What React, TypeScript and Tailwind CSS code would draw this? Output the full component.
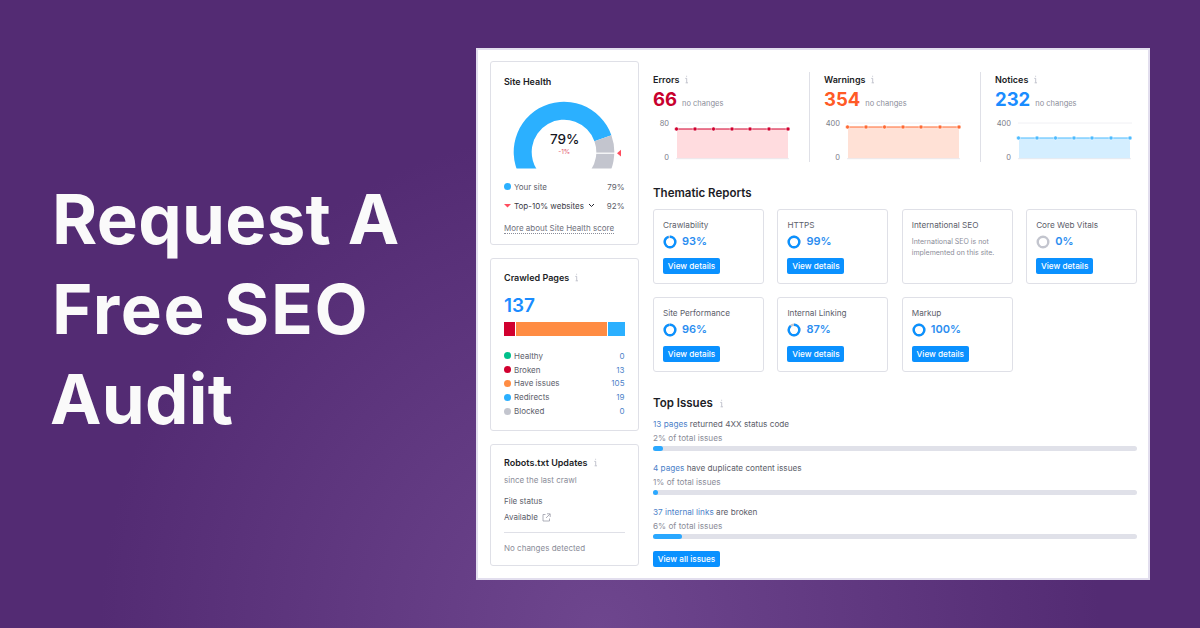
import React from "react";

const font = "font-['Inter','Noto_Sans',sans-serif]";

function Info({ className = "" }: { className?: string }) {
  return (
    <svg viewBox="0 0 5 9" className={`inline-block w-[5px] h-[9px] ${className}`}>
      <path d="M2.6 0.8v0.9M1.3 3.4h1.4v4.2M1.6 7.8h2.4" fill="none" stroke="#b4b6c2" strokeWidth="0.8" />
    </svg>
  );
}

function Dot({ color }: { color: string }) {
  return <span className="w-[7px] h-[7px] rounded-full shrink-0" style={{ background: color }} />;
}

function Gauge() {
  const cx = 60;
  const cy = 52;
  const arc = (r1: number, r2: number, a1: number, a2: number) => {
    const p = (r: number, a: number) => `${cx + r * Math.cos(a)} ${cy - r * Math.sin(a)}`;
    const large = a1 - a2 > Math.PI ? 1 : 0;
    return `M${p(r1, a1)} A${r1} ${r1} 0 ${large} 1 ${p(r1, a2)} L${p(r2, a2)} A${r2} ${r2} 0 ${large} 0 ${p(r2, a1)} Z`;
  };
  const split = (19.6 * Math.PI) / 180;
  const start = Math.PI + 0.7;
  const end = -0.7;
  return (
    <svg width="120" height="70" viewBox="0 0 120 70" className="block">
      <defs>
        <clipPath id="gauge-clip">
          <rect x="0" y="0" width="120" height="68.5" />
        </clipPath>
      </defs>
      <g clipPath="url(#gauge-clip)">
        <path d={arc(50.3, 32.3, start, split)} fill="#2bb0ff" />
        <path d={arc(50.3, 32.3, split, end)} fill="#c3c5ce" />
        <rect x="91" y="52.6" width="20" height="1.2" fill="#ffffff" />
      </g>
      <path d="M113 53.2l4-3.4v6.8z" fill="#ff4d5e" />
    </svg>
  );
}

function SiteHealth() {
  return (
    <section className="h-[184px] border border-[#dfe0e7] rounded-[3px] px-[13.5px] pt-[12.5px] mb-[13px]">
      <h3 className="text-[9px] leading-[13px] font-semibold text-[#1c1d26]">Site Health</h3>
      <div className="relative mt-[12px] mx-auto w-[120px] h-[70px]">
        <Gauge />
        <div className="absolute left-[1px] right-0 top-[31px] text-center text-[13.5px] leading-[16px] font-medium text-[#16171f]">79%</div>
        <div className="absolute left-0 right-0 top-[48px] text-center text-[6.5px] leading-[8px] text-[#e2566f]">-1%</div>
      </div>
      <div className="mt-[11px] flex items-center justify-between h-[12px] text-[8px] text-[#5c5e6a]">
        <span className="flex items-center gap-[3px]"><Dot color="#2bb0ff" />Your site</span>
        <span>79%</span>
      </div>
      <div className="mt-[7px] flex items-center justify-between h-[12px] text-[8px] text-[#3a3b46]">
        <span className="flex items-center gap-[3px]">
          <svg width="7" height="4" viewBox="0 0 7 4"><path d="M0 0h7L3.5 3.5z" fill="#ff4d5e" /></svg>
          Top-10% websites
          <svg width="7" height="5" viewBox="0 0 7 5" className="ml-[1px]"><path d="M1 1l2.5 2.5L6 1" fill="none" stroke="#26272f" strokeWidth="1" /></svg>
        </span>
        <span className="text-[#5c5e6a]">92%</span>
      </div>
      <div className="mt-[11px] text-[8px] leading-[11px] text-[#6f717d]">
        <span className="border-b border-dotted border-[#8b8d99]">More about Site Health score</span>
      </div>
    </section>
  );
}

const crawled = [
  { label: "Healthy", value: 0, color: "#00c08b" },
  { label: "Broken", value: 13, color: "#d1002f" },
  { label: "Have issues", value: 105, color: "#ff8c43" },
  { label: "Redirects", value: 19, color: "#2bb0ff" },
  { label: "Blocked", value: 0, color: "#c3c5ce" },
];

function CrawledPages() {
  return (
    <section className="h-[173px] border border-[#dfe0e7] rounded-[3px] px-[13.5px] pt-[12px] mb-[13px]">
      <h3 className="text-[9px] leading-[13px] font-semibold text-[#1c1d26] flex items-center gap-[5px]">Crawled Pages <Info /></h3>
      <div className="mt-[10px] text-[19px] leading-[24px] font-semibold text-[#1a8cff]">137</div>
      <div className="mt-[4px] flex gap-[1px] h-[14px]">
        <div className="w-[11px] bg-[#d1002f]" />
        <div className="w-[91px] bg-[#ff8c43]" />
        <div className="flex-1 bg-[#2bb0ff]" />
      </div>
      <ul className="mt-[13px]">
        {crawled.map((row) => (
          <li key={row.label} className="flex items-center justify-between h-[13.8px] text-[8px] text-[#5c5e6a]">
            <span className="flex items-center gap-[3px]"><Dot color={row.color} />{row.label}</span>
            <span className="text-[#4d82c9]">{row.value}</span>
          </li>
        ))}
      </ul>
    </section>
  );
}

function RobotsUpdates() {
  return (
    <section className="h-[122px] border border-[#dfe0e7] rounded-[3px] px-[13.5px] pt-[11px]">
      <h3 className="text-[9px] leading-[13px] font-semibold text-[#1c1d26] flex items-center gap-[5px]">Robots.txt Updates <Info /></h3>
      <p className="mt-[6px] text-[8px] leading-[11px] text-[#8b8d99]">since the last crawl</p>
      <p className="mt-[10px] text-[8px] leading-[11px] text-[#5c5e6a]">File status</p>
      <p className="mt-[5px] text-[8px] leading-[11px] text-[#5c5e6a] flex items-center gap-[4px]">
        Available
        <svg width="9" height="9" viewBox="0 0 9 9" fill="none" stroke="#9a9ca8" strokeWidth="0.8">
          <path d="M3.5 1.5H1v6.5h6.5V5.5M5 0.8h3.2V4M8 1L4 5" />
        </svg>
      </p>
      <div className="mt-[9px] border-t border-[#dfe0e7]" />
      <p className="mt-[10px] text-[8px] leading-[11px] text-[#8b8d99]">No changes detected</p>
    </section>
  );
}

function MiniChart({ top, y, line, fill }: { top: number; y: number; line: string; fill: string }) {
  const xs = [23.5, 42, 60.5, 79, 97, 116, 135];
  return (
    <svg width="140" height="46" viewBox="0 -4 140 46" className="block">
      <text x="16" y="5" textAnchor="end" fontSize="7.5" fill="#7b7d89" fontFamily="Inter">{top}</text>
      <text x="16" y="39" textAnchor="end" fontSize="7.5" fill="#7b7d89" fontFamily="Inter">0</text>
      <line x1="23" x2="137" y1="2" y2="2" stroke="#f0f0f4" strokeWidth="1" />
      <rect x="24" y={y} width="111" height={37.5 - y} fill={fill} />
      <line x1="23" x2="136" y1="37.7" y2="37.7" stroke="#e3e4ea" strokeWidth="0.8" />
      <line x1="23.5" x2="135" y1={y} y2={y} stroke={line} strokeWidth="1.2" />
      {xs.map((x) => (
        <circle key={x} cx={x} cy={y} r="2" fill={line} stroke="#ffffff" strokeWidth="0.5" />
      ))}
    </svg>
  );
}

const stats = [
  { title: "Errors", value: 66, color: "#c8002d", top: 80, y: 8, line: "#d1002f", fill: "#ffdcdf" },
  { title: "Warnings", value: 354, color: "#ff5a26", top: 400, y: 6, line: "#ff6a33", fill: "#ffe1d6" },
  { title: "Notices", value: 232, color: "#1a8cff", top: 400, y: 17, line: "#4dbbff", fill: "#d4eeff" },
];

function StatRow() {
  return (
    <div className="mt-[11px] flex h-[90px]">
      {stats.map((s, i) => (
        <div key={s.title} className={i < 2 ? "w-[171px] flex" : "flex-1 flex"}>
          <div className="w-[156px]">
            <h3 className="mt-[1px] text-[9px] leading-[13px] font-semibold text-[#1c1d26] flex items-center gap-[5px]">{s.title} <Info /></h3>
            <div className="mt-[1px] flex items-baseline gap-[5px] h-[24px]">
              <span className="text-[18.5px] leading-[24px] font-bold" style={{ color: s.color }}>{s.value}</span>
              <span className="text-[7.5px] text-[#8b8d99]">no changes</span>
            </div>
            <div className="mt-[6px]"><MiniChart top={s.top} y={s.y} line={s.line} fill={s.fill} /></div>
          </div>
          {i < 2 && <div className="w-px h-[90px] bg-[#dfe0e7]" />}
        </div>
      ))}
    </div>
  );
}

function Ring({ pct, color = "#0a91ff" }: { pct: number; color?: string }) {
  const c = 2 * Math.PI * 5.3;
  return (
    <svg width="14" height="14" viewBox="0 0 14 14">
      <circle cx="7" cy="7" r="5.3" fill="none" stroke="#c3c5ce" strokeWidth="2.4" />
      {pct > 0 && (
        <circle
          cx="7"
          cy="7"
          r="5.3"
          fill="none"
          stroke={color}
          strokeWidth="2.4"
          strokeDasharray={`${(c * pct) / 100} ${c}`}
          transform="rotate(-90 7 7)"
        />
      )}
    </svg>
  );
}

function BlueButton({ children, className = "" }: { children: React.ReactNode; className?: string }) {
  return (
    <button className={`h-[16px] rounded-[2px] bg-[#0a91ff] text-white text-[8.2px] font-medium leading-[16px] ${className}`}>
      {children}
    </button>
  );
}

const reports = [
  { title: "Crawlability", pct: 93 },
  { title: "HTTPS", pct: 99 },
  { title: "International SEO", note: "International SEO is not implemented on this site." },
  { title: "Core Web Vitals", pct: 0 },
  { title: "Site Performance", pct: 96 },
  { title: "Internal Linking", pct: 87 },
  { title: "Markup", pct: 100 },
];

function Thematic() {
  return (
    <section className="mt-[22.5px]">
      <h2 className="text-[11.5px] leading-[16px] font-semibold text-[#1c1d26]">Thematic Reports</h2>
      <div className="mt-[8px] grid grid-cols-4 gap-x-[13.5px] gap-y-[13px] w-[484px]">
        {reports.map((r) => (
          <div key={r.title} className="h-[75px] border border-[#dfe0e7] rounded-[3px] pl-[9px] pt-[9px]">
            <div className="text-[8.2px] leading-[12px] text-[#5c5e6a]">{r.title}</div>
            {r.note ? (
              <p className="mt-[5px] pr-[6px] text-[7px] leading-[11.5px] text-[#8b8d99]">{r.note}</p>
            ) : (
              <>
                <div className="mt-[4px] h-[14px] flex items-center gap-[5px] text-[11px] font-semibold text-[#2b8df0]">
                  <Ring pct={r.pct ?? 0} color={r.pct === 0 ? "#c3c5ce" : "#0a91ff"} />
                  {r.pct}%
                </div>
                <BlueButton className="mt-[9px] block w-[57px]">View details</BlueButton>
              </>
            )}
          </div>
        ))}
      </div>
    </section>
  );
}

const issues = [
  { link: "13 pages", rest: " returned 4XX status code", share: "2% of total issues", w: "w-[10px]" },
  { link: "4 pages", rest: " have duplicate content issues", share: "1% of total issues", w: "w-[5px]" },
  { link: "37 internal links", rest: " are broken", share: "6% of total issues", w: "w-[29px]" },
];

function TopIssues() {
  return (
    <section className="mt-[23.5px]">
      <h2 className="text-[11.5px] leading-[16px] font-semibold text-[#1c1d26] flex items-center gap-[6px]">Top Issues <Info /></h2>
      <div className="mt-[7px] flex flex-col gap-[11px] w-[484px]">
        {issues.map((it) => (
          <div key={it.link}>
            <div className="text-[8.2px] leading-[13px] text-[#5c5e6a]"><span className="text-[#4d82c9]">{it.link}</span>{it.rest}</div>
            <div className="mt-[1px] text-[8.2px] leading-[13px] text-[#8b8d99]">{it.share}</div>
            <div className="mt-[1px] h-[5px] rounded-full bg-[#e0e1e9]">
              <div className={`h-[5px] rounded-full bg-[#2aa8ff] ${it.w}`} />
            </div>
          </div>
        ))}
      </div>
      <BlueButton className="mt-[12px] block w-[67px]">View all issues</BlueButton>
    </section>
  );
}

export default function App() {
  return (
    <div className={`${font} w-[1200px] h-[628px] overflow-hidden flex bg-[radial-gradient(circle_500px_at_600px_628px,#6e468e_0%,#532b73_100%)]`}>
      <div className="w-[476px] pl-[52px] pt-[174px]">
        <h1 className="text-[69px] leading-[90px] font-bold text-[#fafafa]">
          <span className="tracking-[0.3px]">Request A</span><br />
          <span className="tracking-[1.6px]">Free SEO</span><br />
          <span className="inline-block -ml-[2px] tracking-[0.3px]">Audit</span>
        </h1>
      </div>
      <div className="mt-[48px] w-[674px] h-[532px] bg-white border-2 border-[#e2deee] flex pl-[11.5px] pt-[11px]">
        <aside className="w-[149.5px] shrink-0">
          <SiteHealth />
          <CrawledPages />
          <RobotsUpdates />
        </aside>
        <main className="ml-[14px] flex-1">
          <StatRow />
          <Thematic />
          <TopIssues />
        </main>
      </div>
    </div>
  );
}
